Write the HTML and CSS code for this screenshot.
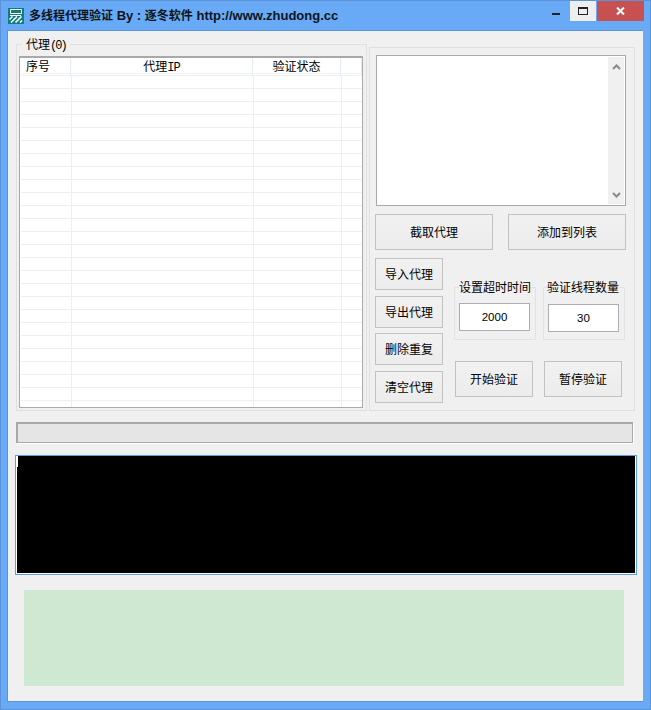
FILE: index.html
```html
<!DOCTYPE html>
<html lang="zh-CN">
<head>
<meta charset="utf-8">
<title>多线程代理验证</title>
<link rel="stylesheet" href="styles.css">
</head>
<body>
<div class="window">
  <header class="titlebar">
    <svg class="app-icon" viewBox="0 0 16 16" aria-hidden="true">
      <rect width="16" height="16" fill="#0f7f7c"/>
      <path d="M2.500 1.500h11v4h-11z" fill="none" stroke="#fff" stroke-width="1"/>
      <path d="M2 7.500h11" fill="none" stroke="#fff" stroke-width="1"/>
      <path d="M1.500 11.500l3-3M3 14.500l6-6M7.500 14.500l6-6M12 14.500l2-2" fill="none" stroke="#fff" stroke-width="1.600"/>
    </svg>
    <span class="title"><span class="cjk">多线程代理验证</span> By : <span class="cjk">逐冬软件</span> http://www.zhudong.cc</span>
    <div class="controls">
      <span class="min"></span>
      <span class="max"><i></i></span>
      <span class="close">
        <svg viewBox="0 0 9 8" width="9" height="8" aria-hidden="true"><path d="M1 .5l7 7M8 .5l-7 7" stroke="#fff" stroke-width="2" fill="none"/></svg>
      </span>
    </div>
  </header>
  <main class="client">
    <div class="top">
      <fieldset class="group proxy-group">
        <legend>代理<span class="count">(0)</span></legend>
        <div class="list">
          <div class="list-head">
            <span class="col-a">序号</span>
            <span class="col-b">代理<span class="latin">IP</span></span>
            <span class="col-c">验证状态</span>
            <span class="col-d"></span>
          </div>
          <div class="list-rows"></div>
        </div>
      </fieldset>
      <section class="group side">
        <div class="memo">
          <div class="memo-scroll">
            <svg viewBox="0 0 9 6" width="9" height="6" aria-hidden="true"><path d="M1 5l3.500-3.500L8 5" fill="none" stroke="#8a8a8a" stroke-width="2"/></svg>
            <svg viewBox="0 0 9 6" width="9" height="6" aria-hidden="true"><path d="M1 1l3.500 3.500L8 1" fill="none" stroke="#8a8a8a" stroke-width="2"/></svg>
          </div>
        </div>
        <div class="wide-row">
          <button class="btn wide">截取代理</button>
          <button class="btn wide">添加到列表</button>
        </div>
        <div class="lower">
          <div class="stack">
            <button class="btn small">导入代理</button>
            <button class="btn small s2">导出代理</button>
            <button class="btn small s3">删除重复</button>
            <button class="btn small s4">清空代理</button>
          </div>
          <div class="settings">
            <div class="fields">
              <fieldset class="mini">
                <legend>设置超时时间</legend>
                <div class="input">2000</div>
              </fieldset>
              <fieldset class="mini second">
                <legend>验证线程数量</legend>
                <div class="input">30</div>
              </fieldset>
            </div>
            <div class="actions">
              <button class="btn action">开始验证</button>
              <button class="btn action">暂停验证</button>
            </div>
          </div>
        </div>
      </section>
    </div>
    <div class="progress"></div>
    <div class="console"><div class="console-inner"><span class="caret"></span></div></div>
    <div class="banner"></div>
  </main>
</div>
</body>
</html>
```
FILE: styles.css
```css
* { box-sizing: border-box; }
html, body { margin: 0; height: 100%; }
body {
  font-family: "Noto Sans CJK SC", "Liberation Sans", sans-serif;
  font-size: 12px;
  color: #000;
}
.window {
  width: 651px;
  height: 710px;
  background: #69aaf6;
  border: 1px solid #5b93d6;
  display: flex;
  flex-direction: column;
  padding: 0 6px 7px 6px;
}
.titlebar {
  height: 29px;
  flex: none;
  display: flex;
  align-items: flex-start;
}
.app-icon { width: 16px; height: 16px; margin: 7px 0 0 1px; flex: none; }
.title {
  margin: 6px 0 0 5px;
  font: bold 13px/18px "Liberation Sans", "Noto Sans CJK SC", sans-serif;
  color: #0c1420;
  white-space: nowrap;
}
.cjk { font-size: 12px; }
.controls { margin-left: auto; display: flex; align-items: flex-start; }
.min {
  width: 8px; height: 2px; background: #222;
  margin: 12px 10px 0 0;
}
.max {
  width: 26px; height: 20px; background: #eeeeee;
  display: flex; align-items: center; justify-content: center;
  margin-right: 1px;
}
.max i {
  display: block; width: 10px; height: 8px;
  border: 1px solid #222; border-top-width: 2px;
}
.close {
  width: 47px; height: 20px; background: #c75050;
  display: flex; align-items: center; justify-content: center;
}
.client {
  flex: 1;
  background: #f0f0f0;
  border: 1px solid #5b93d6;
  border-width: 1px 0 1px 1px;
  padding: 0 0 0 8px;
  display: flex;
  flex-direction: column;
  width: 636px;
}
.top { display: flex; align-items: flex-start; height: 384px; margin-top: 7px; flex: none; }
.group { border: 1px solid #e0e0e0; margin: 0; padding: 0; }
.proxy-group {
  width: 351px;
  height: 373px;
  padding: 0 3px 0 2px;
  min-width: 0;
}
.proxy-group legend {
  margin-left: 3px;
  padding: 0 4px 0 4px;
  font-size: 12px;
  line-height: 12px;
  height: 12px;
}
.count { font: 12px/12px "Liberation Mono", monospace; letter-spacing: -2px; }
.list {
  height: 352px;
  margin-top: 6px;
  background: #fff;
  border: 1px solid #a9a9a9;
  border-top-width: 2px;
  padding-left: 1px;
  overflow: hidden;
}
.list-head {
  display: grid;
  grid-template-columns: 50px 182px 88px 21px;
  height: 16px;
  line-height: 16px;
  font-size: 12px;
  text-align: center;
  border-bottom: 1px solid #eef3fb;
}
.list-head span { white-space: nowrap; }
.list-head > span { border-right: 1px solid #e3ecf9; }
.col-a { text-align: left; padding-left: 5px; }
.latin { font: 12px "Liberation Mono", monospace; letter-spacing: -1px; }
.list-rows {
  height: 332px;
  margin-top: 1px;
  background:
    linear-gradient(#eeeeee 0 0) 50px 0 / 1px 100% no-repeat,
    linear-gradient(#eeeeee 0 0) 232px 0 / 1px 100% no-repeat,
    linear-gradient(#eeeeee 0 0) 320px 0 / 1px 100% no-repeat,
    repeating-linear-gradient(#eeeeee 0 1px, #fff 1px 13px);
}
.side {
  width: 266px;
  height: 364px;
  margin: 9px 0 0 2px;
  padding: 7px 8px 0 6px;
}
.memo {
  height: 151px;
  background: #fff;
  border: 1px solid #a9a9a9;
  display: flex;
  justify-content: flex-end;
}
.memo-scroll {
  width: 16px;
  margin: 1px 1px 1px 0;
  background: #f0f0f0;
  display: flex;
  flex-direction: column;
  justify-content: space-between;
  align-items: center;
  padding: 7px 0 6px;
}
.btn {
  font: 12px "Noto Sans CJK SC", sans-serif;
  color: #000;
  background: linear-gradient(#f1f1f1, #ececec);
  border: 1px solid #c2c2c2;
  padding: 0 0 1px;
  margin: 0;
  display: block;
}
.wide-row { display: flex; justify-content: space-between; margin: 8px 0 0 -1px; }
.wide { width: 118px; height: 36px; }
.lower { display: flex; margin: 8px 0 0 -1px; }
.stack { width: 68px; flex: none; }
.small { width: 68px; height: 32px; }
.s2 { margin-top: 6px; }
.s3 { margin-top: 5px; }
.s4 { margin-top: 6px; }
.settings { margin-left: 11px; }
.fields { display: flex; margin-top: 22px; }
.mini {
  width: 82px;
  height: 60px;
  margin: 0;
  padding: 0 0 0 4px;
  border: 1px solid #e2e2e2;
  min-width: 0;
}
.mini.second { margin-left: 7px; }
.mini.second legend { margin-left: -1px; }
.mini legend {
  padding: 0;
  font-size: 12px;
  line-height: 14px;
  height: 14px;
  white-space: nowrap;
}
.input {
  width: 71px;
  height: 28px;
  margin-top: 9px;
  background: #fff;
  border: 1px solid #adadb5;
  text-align: center;
  font: 11.500px/26px "Liberation Sans", sans-serif;
}
.second .input { margin-top: 10px; }
.actions { display: flex; margin: 21px 0 0 1px; gap: 11px; }
.action { width: 78px; height: 36px; }
.progress {
  width: 617px;
  height: 21px;
  background: #e5e5e5;
  border: 2px solid #a8a8a8;
  border-width: 2px 1px 1px 2px;
  box-shadow: 1px 1px 0 #fff;
  flex: none;
}
.console {
  width: 622px;
  height: 120px;
  margin: 12px 0 0 -1px;
  border: 1px solid #5b9fe8;
  background: #fff;
  padding: 0 1px 1px 1px;
  flex: none;
}
.console-inner { height: 100%; background: #000; }
.caret { display: block; width: 1px; height: 11px; background: #fff; }
.banner {
  width: 600px;
  height: 96px;
  margin: 15px 0 0 8px;
  background: #cee8d1;
  flex: none;
}
```
